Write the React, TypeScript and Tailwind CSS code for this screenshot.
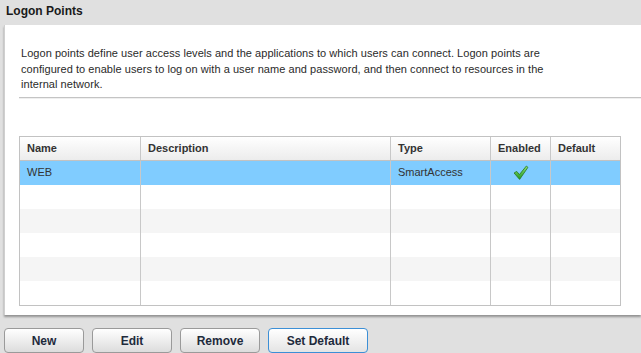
import React from 'react';

const columns = [
  { key: 'name', label: 'Name', width: 'w-[121px]' },
  { key: 'description', label: 'Description', width: 'w-[250px]' },
  { key: 'type', label: 'Type', width: 'w-[100px]' },
  { key: 'enabled', label: 'Enabled', width: 'w-[60px]' },
  { key: 'default', label: 'Default', width: 'w-[70px]' },
];

const rows = [
  { name: 'WEB', description: '', type: 'SmartAccess', enabled: true, selected: true },
  null,
  null,
  null,
  null,
  null,
];

const Check: React.FC = () => (
  <svg width="16" height="16" viewBox="0 0 15 15">
    <defs>
      <linearGradient id="chk" x1="0" y1="0" x2="0" y2="1">
        <stop offset="0" stopColor="#8fe07a" />
        <stop offset="1" stopColor="#1f9a1c" />
      </linearGradient>
    </defs>
    <path
      d="M1 7.5 L3.5 6 L6 9 L12.5 1 L14 2.2 L6.2 13.5 Z"
      fill="url(#chk)"
      stroke="#2a7a22"
      strokeWidth="0.8"
      strokeLinejoin="round"
    />
  </svg>
);

const Button: React.FC<{ label: string; focused?: boolean }> = ({ label, focused }) => (
  <button
    className={
      focused
        ? 'w-[100px] h-[25px] rounded-[4px] border border-[#3c8fd6] bg-gradient-to-b from-white to-[#e4e4e4] text-[12px] font-bold text-[#1e2a3c]'
        : 'w-[80px] h-[25px] rounded-[4px] border border-[#9a9a9a] bg-gradient-to-b from-white to-[#dcdcdc] text-[12px] font-bold text-[#1e2a3c]'
    }
  >
    {label}
  </button>
);

const App: React.FC = () => {
  return (
    <div
      className="w-[641px] h-[353px] bg-[#e0e0e0] overflow-hidden flex flex-col"
      style={{ fontFamily: '"Liberation Sans", Arial, sans-serif' }}
    >
      <div className="h-[25px] pl-[6px] pt-[2px] text-[12px] font-bold text-[#1a1a1a]">Logon Points</div>

      <div className="ml-[4px] h-[290px] bg-white border-l border-[#cfcfcf] shadow-[0_2px_2px_rgba(0,0,0,0.35)]">
        <div className="pl-[16px] pt-[21px] text-[11px] leading-[15.5px] tracking-[0.05px] text-[#2a2a2a] whitespace-nowrap">
          Logon points define user access levels and the applications to which users can connect. Logon points are
          <br />
          configured to enable users to log on with a user name and password, and then connect to resources in the
          <br />
          internal network.
        </div>
        <div className="ml-[14px] mt-[4px] h-[2px] border-t border-[#c4c4c4] bg-[#efefef]" />

        <div className="ml-[14px] mt-[37px] w-[602px] border border-[#c2c2c2] text-[11px] text-[#333]">
          <div className="flex h-[24px] bg-gradient-to-b from-white to-[#ececec] border-b border-[#c2c2c2] font-bold">
            {columns.map((c, i) => (
              <div
                key={c.key}
                className={`${c.width} shrink-0 pl-[7px] flex items-center ${i < columns.length - 1 ? 'border-r border-[#c8c8c8]' : ''}`}
              >
                {c.label}
              </div>
            ))}
          </div>
          {rows.map((r, idx) => (
            <div
              key={idx}
              className={`flex h-[24px] ${r?.selected ? 'bg-[#80ccff]' : idx % 2 === 0 ? 'bg-[#f5f5f5]' : 'bg-white'}`}
            >
              <div className="w-[121px] shrink-0 pl-[7px] flex items-center border-r border-[#c8c8c8]">{r?.name}</div>
              <div className="w-[250px] shrink-0 pl-[7px] flex items-center border-r border-[#c8c8c8]">{r?.description}</div>
              <div className="w-[100px] shrink-0 pl-[7px] flex items-center border-r border-[#c8c8c8]">{r?.type}</div>
              <div className="w-[60px] shrink-0 flex items-center justify-center border-r border-[#c8c8c8]">
                {r?.enabled && <Check />}
              </div>
              <div className="w-[70px] shrink-0" />
            </div>
          ))}
        </div>
      </div>

      <div className="flex gap-[8px] pl-[4px] pt-[13px]">
        <Button label="New" />
        <Button label="Edit" />
        <Button label="Remove" />
        <Button label="Set Default" focused />
      </div>
    </div>
  );
};

export default App;
